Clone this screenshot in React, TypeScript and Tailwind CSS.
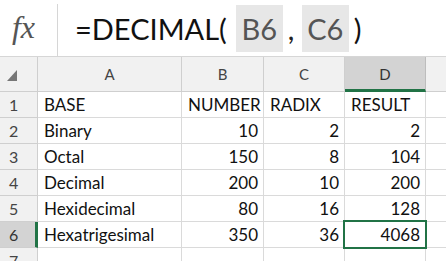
import React from "react";

const font = { fontFamily: "Lato, 'Open Sans', sans-serif" };

type Row = { n: number; a: string; b: string; c: string; d: string };

const rows: Row[] = [
  { n: 1, a: "BASE", b: "NUMBER", c: "RADIX", d: "RESULT" },
  { n: 2, a: "Binary", b: "10", c: "2", d: "2" },
  { n: 3, a: "Octal", b: "150", c: "8", d: "104" },
  { n: 4, a: "Decimal", b: "200", c: "10", d: "200" },
  { n: 5, a: "Hexidecimal", b: "80", c: "16", d: "128" },
  { n: 6, a: "Hexatrigesimal", b: "350", c: "36", d: "4068" },
];

export default function App() {
  return (
    <div className="w-[446px] h-[261px] overflow-hidden bg-white" style={font}>
      {/* formula bar */}
      <div className="h-[57px] flex items-stretch border-b border-[#d6d6d6]">
        <div className="w-[57px] flex items-center justify-center">
          <span
            className="text-[32px] italic text-[#555] leading-none -mt-[2px] -ml-[10px]"
            style={{ fontFamily: "'Liberation Serif', 'DejaVu Serif', serif" }}
          >
            fx
          </span>
        </div>
        <div className="w-px bg-[#d6d6d6] mt-[4px]" />
        <div className="flex items-center pl-[17px] text-[29px] leading-none text-[#111]">
          <span>=DECIMAL(</span>
          <span className="ml-[9px] w-[47px] h-[47px] bg-[#e7e7e7] text-[#555] flex items-center justify-center">B6</span>
          <span className="ml-[5px] w-[14px] text-[#222]">,</span>
          <span className="w-[47px] h-[47px] bg-[#e7e7e7] text-[#555] flex items-center justify-center">C6</span>
          <span className="ml-[5px]">)</span>
        </div>
      </div>

      {/* grid */}
      <div className="grid grid-cols-[38px_144px_82px_81px_81px_1fr]">
        {/* header row */}
        <div className="h-[35px] bg-[#f1f1f1] border-r border-b border-[#cfcfcf] relative">
          <svg className="absolute left-[7px] top-[13px]" width="10" height="11" viewBox="0 0 10 11">
            <polygon points="10,0 10,11 0,11" fill="#777" />
          </svg>
        </div>
        {["A", "B", "C"].map((h) => (
          <div
            key={h}
            className="h-[35px] bg-[#f1f1f1] border-r border-b border-[#cfcfcf] flex items-center justify-center text-[15px] text-[#444]"
          >
            {h}
          </div>
        ))}
        <div className="h-[35px] bg-[#d3d3d3] border-r border-[#bdbdbd] border-b-[3px] border-b-[#217346] flex items-center justify-center text-[15px] text-[#333] pt-[2px]">
          D
        </div>
        <div className="h-[35px] bg-[#f1f1f1] border-b border-[#cfcfcf]" />

        {rows.map((r) => {
          const sel = r.n === 6;
          return (
            <React.Fragment key={r.n}>
              <div
                className={
                  "h-[26px] flex items-center pl-[9px] text-[16px] " +
                  (sel
                    ? "bg-[#d3d3d3] text-[#333] border-r-[3px] border-r-[#217346] border-b border-b-[#cfcfcf]"
                    : "bg-[#f1f1f1] text-[#444] border-r border-b border-[#cfcfcf]")
                }
              >
                {r.n}
              </div>
              <div className="h-[26px] border-r border-b border-[#dadada] flex items-center pl-[6px] text-[17px] text-[#111]">
                {r.a}
              </div>
              <div
                className={
                  "h-[26px] border-r border-b border-[#dadada] flex items-center text-[17px] text-[#111] " +
                  (r.n === 1 ? "pl-[6px]" : "justify-end pr-[5px]")
                }
              >
                {r.b}
              </div>
              <div
                className={
                  "h-[26px] border-r border-b border-[#dadada] flex items-center text-[17px] text-[#111] " +
                  (r.n === 1 ? "pl-[6px]" : "justify-end pr-[5px]")
                }
              >
                {r.c}
              </div>
              <div
                className={
                  "h-[26px] border-r border-b border-[#dadada] flex items-center text-[17px] text-[#111] relative " +
                  (r.n === 1 ? "pl-[6px]" : "justify-end pr-[5px]")
                }
              >
                {r.d}
                {sel && (
                  <div className="absolute -left-[2px] -top-[2px] -right-[2px] -bottom-[2px] border-2 border-[#217346]" />
                )}
              </div>
              <div className="h-[26px] border-b border-[#dadada]" />
            </React.Fragment>
          );
        })}

        {/* row 7 partial */}
        <div className="h-[26px] bg-[#f1f1f1] border-r border-b border-[#cfcfcf] flex items-center pl-[9px] text-[16px] text-[#444]">
          7
        </div>
        <div className="h-[26px] border-r border-[#dadada]" />
        <div className="h-[26px] border-r border-[#dadada]" />
        <div className="h-[26px] border-r border-[#dadada]" />
        <div className="h-[26px] border-r border-[#dadada]" />
        <div className="h-[26px]" />
      </div>
    </div>
  );
}
